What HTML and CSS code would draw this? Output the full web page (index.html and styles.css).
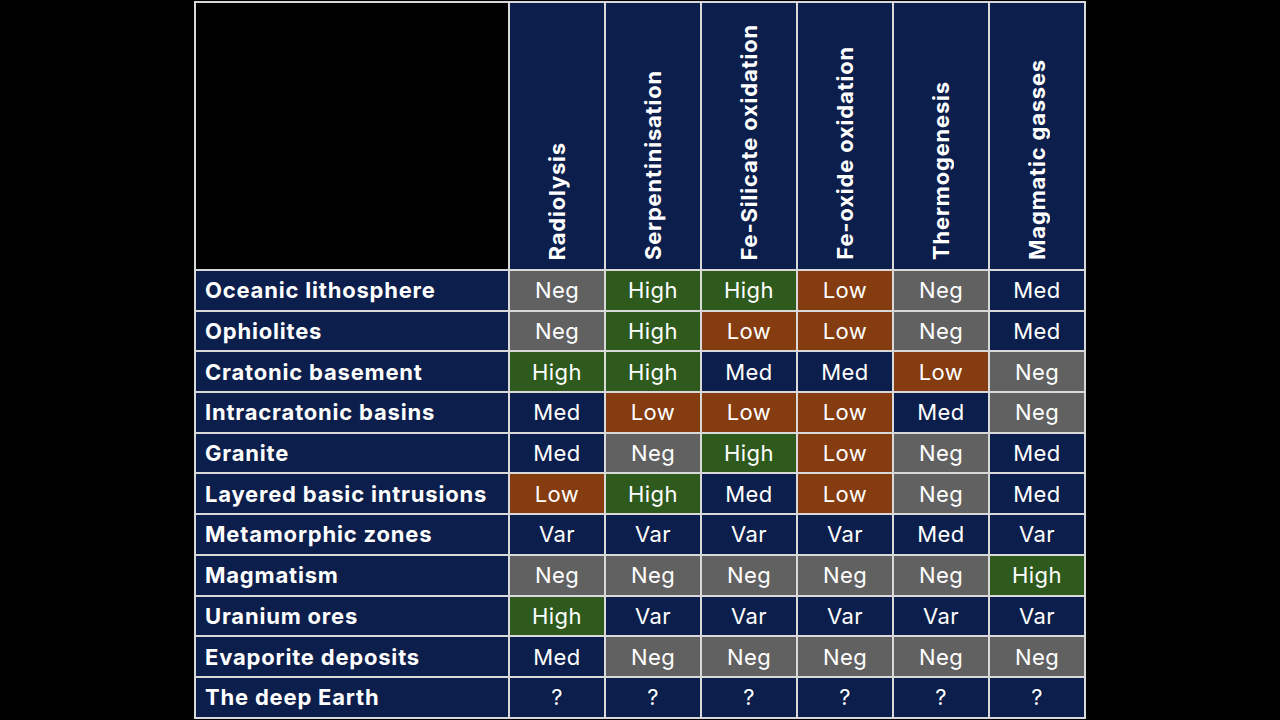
FILE: index.html
```html
<!DOCTYPE html>
<html lang="en">
<head>
  <meta charset="UTF-8">
  <title>Hydrogen sources</title>
  <link rel="stylesheet" href="styles.css">
</head>
<body>
  <table class="matrix">
    <thead>
      <tr>
        <th class="corner"></th>
        <th class="proc"><span>Radiolysis</span></th>
        <th class="proc"><span>Serpentinisation</span></th>
        <th class="proc"><span>Fe-Silicate oxidation</span></th>
        <th class="proc"><span>Fe-oxide oxidation</span></th>
        <th class="proc"><span>Thermogenesis</span></th>
        <th class="proc"><span>Magmatic gasses</span></th>
      </tr>
    </thead>
    <tbody>
      <tr><th>Oceanic lithosphere</th><td class="neg">Neg</td><td class="high">High</td><td class="high">High</td><td class="low">Low</td><td class="neg">Neg</td><td>Med</td></tr>
      <tr><th>Ophiolites</th><td class="neg">Neg</td><td class="high">High</td><td class="low">Low</td><td class="low">Low</td><td class="neg">Neg</td><td>Med</td></tr>
      <tr><th>Cratonic basement</th><td class="high">High</td><td class="high">High</td><td>Med</td><td>Med</td><td class="low">Low</td><td class="neg">Neg</td></tr>
      <tr><th>Intracratonic basins</th><td>Med</td><td class="low">Low</td><td class="low">Low</td><td class="low">Low</td><td>Med</td><td class="neg">Neg</td></tr>
      <tr><th>Granite</th><td>Med</td><td class="neg">Neg</td><td class="high">High</td><td class="low">Low</td><td class="neg">Neg</td><td>Med</td></tr>
      <tr><th>Layered basic intrusions</th><td class="low">Low</td><td class="high">High</td><td>Med</td><td class="low">Low</td><td class="neg">Neg</td><td>Med</td></tr>
      <tr><th>Metamorphic zones</th><td>Var</td><td>Var</td><td>Var</td><td>Var</td><td>Med</td><td>Var</td></tr>
      <tr><th>Magmatism</th><td class="neg">Neg</td><td class="neg">Neg</td><td class="neg">Neg</td><td class="neg">Neg</td><td class="neg">Neg</td><td class="high">High</td></tr>
      <tr><th>Uranium ores</th><td class="high">High</td><td>Var</td><td>Var</td><td>Var</td><td>Var</td><td>Var</td></tr>
      <tr><th>Evaporite deposits</th><td>Med</td><td class="neg">Neg</td><td class="neg">Neg</td><td class="neg">Neg</td><td class="neg">Neg</td><td class="neg">Neg</td></tr>
      <tr><th>The deep Earth</th><td>?</td><td>?</td><td>?</td><td>?</td><td>?</td><td>?</td></tr>
    </tbody>
  </table>
</body>
</html>
```

FILE: styles.css
```css
body {
  margin: 0;
  background-color: #000;
  font-family: Inter, "Open Sans", sans-serif;
}
.matrix {
  border-collapse: collapse;
  margin: 1px auto 0;
  width: 892px;
  table-layout: fixed;
  color: #fff;
}
.matrix th, .matrix td {
  border: 2px solid #d9d9d9;
  background-color: #0c1e4b;
  padding: 0;
}
.matrix .corner {
  width: 312px;
  height: 266px;
  background-color: #000;
}
.matrix .proc {
  vertical-align: bottom;
  text-align: center;
  padding-bottom: 5px;
}
.matrix .proc span {
  display: inline-block;
  writing-mode: vertical-rl;
  transform: rotate(180deg);
  font-size: 22px;
  font-weight: 700;
  letter-spacing: 0.8px;
  line-height: 1;
}
.matrix tbody th {
  text-align: left;
  font-size: 22px;
  font-weight: 700;
  letter-spacing: 0.8px;
  padding: 1px 0 1px 9px;
  height: 36.7px;
}
.matrix td {
  text-align: center;
  font-size: 22px;
  font-weight: 400;
  letter-spacing: 0.4px;
}
.matrix td.neg {
  background-color: #616161;
}
.matrix td.high {
  background-color: #2e5a1d;
}
.matrix td.low {
  background-color: #843c10;
}
```
